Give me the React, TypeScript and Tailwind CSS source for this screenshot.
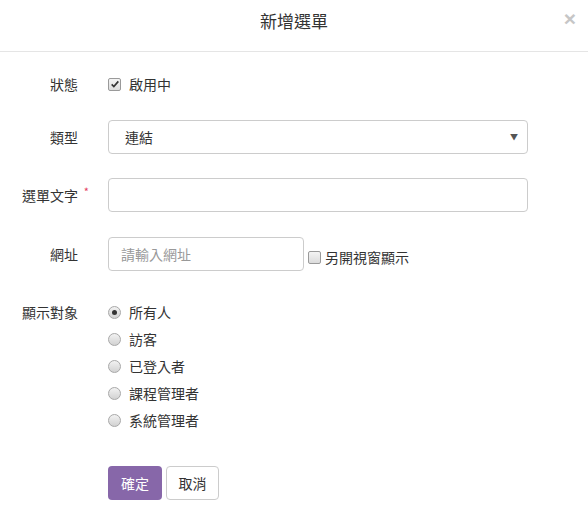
import { useState } from "react";

const font = { fontFamily: '"Noto Sans CJK TC", "Noto Sans", sans-serif' };

function CheckBox({ checked }: { checked: boolean }) {
  return (
    <span className="w-[13px] h-[13px] rounded-[2px] border border-[#9a9a9a] bg-gradient-to-b from-[#f4f4f4] to-[#dcdcdc] flex items-center justify-center shrink-0">
      {checked && (
        <svg viewBox="0 0 12 12" className="w-[10px] h-[10px]">
          <path d="M2 6.5 L4.6 9 L10 2.8" fill="none" stroke="#333" strokeWidth={2} />
        </svg>
      )}
    </span>
  );
}

function Radio({ checked }: { checked: boolean }) {
  return (
    <span className="w-[13px] h-[13px] rounded-full border border-[#a8a8a8] bg-gradient-to-b from-[#f2f2f2] to-[#d2d2d2] flex items-center justify-center shrink-0">
      {checked && <span className="w-[5px] h-[5px] rounded-full bg-[#333]" />}
    </span>
  );
}

const audiences = ["所有人", "訪客", "已登入者", "課程管理者", "系統管理者"];

export default function App() {
  const [audience] = useState(0);

  return (
    <div className="w-[588px] h-[522px] bg-white text-[#333] text-[14px]" style={font}>
      {/* Header */}
      <div className="relative h-[52px] border-b border-[#e5e5e5] flex items-center justify-center">
        <h4 className="text-[17px] leading-none -mt-[11px]">新增選單</h4>
        <span
          className="absolute right-[12px] top-[8px] text-[21px] font-bold text-[#c6c6c6] leading-none"
          style={{ fontFamily: '"Liberation Sans", Arial, sans-serif' }}
        >
          ×
        </span>
      </div>

      {/* Form */}
      <div className="pr-[60px]">
        <div className="flex items-center h-[34px] mt-[15px]">
          <label className="w-[108px] pr-[30px] text-right">狀態</label>
          <div className="flex items-center gap-[8px]">
            <CheckBox checked />
            <span>啟用中</span>
          </div>
        </div>

        <div className="flex items-center h-[34px] mt-[19px]">
          <label className="w-[108px] pr-[30px] text-right">類型</label>
          <div className="flex-1 h-[34px] border border-[#ccc] rounded-[4px] flex items-center justify-between pl-[16px] pr-[9px]">
            <span>連結</span>
            <span className="text-[8px] text-[#555]">▼</span>
          </div>
        </div>

        <div className="flex items-center h-[34px] mt-[24px]">
          <label className="relative w-[108px] pr-[30px] text-right">
            選單文字
            <span className="absolute right-[19px] -top-[2px] text-[#e4405f] text-[11px]">*</span>
          </label>
          <div className="flex-1 h-[34px] border border-[#ccc] rounded-[4px]" />
        </div>

        <div className="flex items-center h-[34px] mt-[25px]">
          <label className="w-[108px] pr-[30px] text-right">網址</label>
          <div className="w-[196px] h-[34px] border border-[#ccc] rounded-[4px] flex items-center pl-[12px] text-[#999]">
            請輸入網址
          </div>
          <div className="flex items-center gap-[4px] ml-[4px] mt-[7px]">
            <CheckBox checked={false} />
            <span>另開視窗顯示</span>
          </div>
        </div>

        <div className="flex mt-[28px]">
          <label className="w-[108px] pr-[30px] text-right h-[27px] flex items-center justify-end">顯示對象</label>
          <div className="flex flex-col">
            {audiences.map((a, i) => (
              <div key={a} className="h-[27px] flex items-center gap-[8px]">
                <Radio checked={i === audience} />
                <span>{a}</span>
              </div>
            ))}
          </div>
        </div>

        <div className="flex gap-[4px] pl-[108px] mt-[32px]">
          <button className="w-[54px] h-[34px] rounded-[4px] bg-[#8767a9] text-white">確定</button>
          <button className="w-[53px] h-[34px] rounded-[4px] border border-[#ccc] bg-white">取消</button>
        </div>
      </div>
    </div>
  );
}
